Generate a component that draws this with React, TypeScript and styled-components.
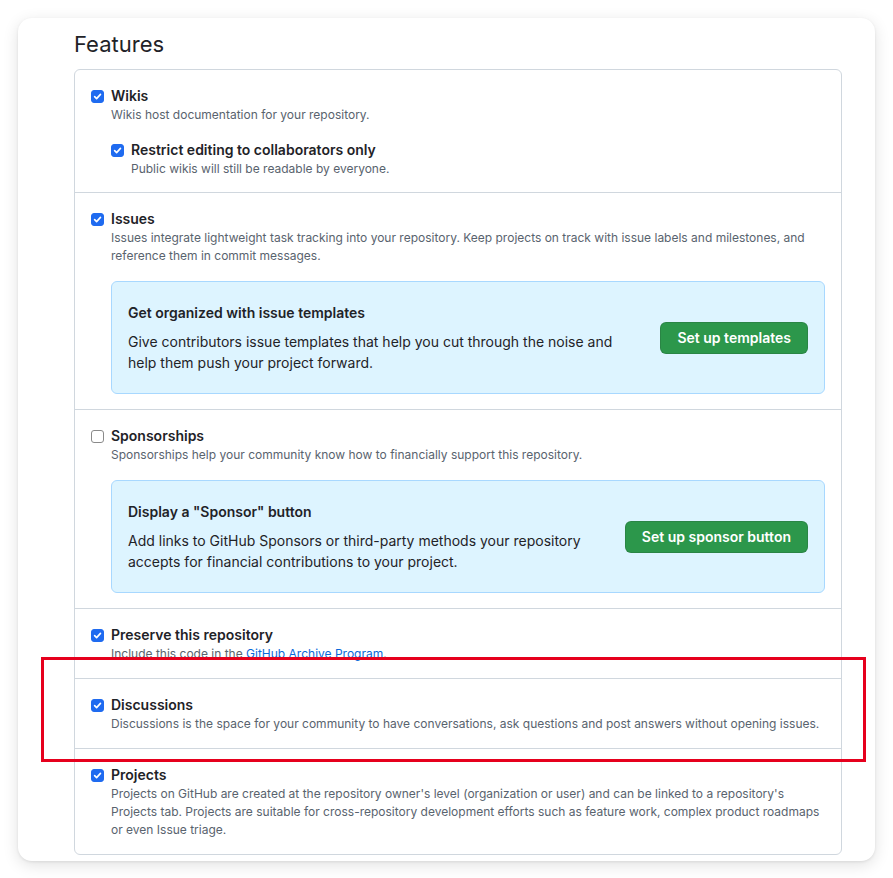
import React from "react";
import styled, { createGlobalStyle } from "styled-components";

const GlobalStyle = createGlobalStyle`
  html, body { margin: 0; padding: 0; background: #ffffff; }
  body {
    font-family: Inter, "Noto Sans", "Liberation Sans", sans-serif;
    color: #1f2328;
    -webkit-font-smoothing: antialiased;
  }
  * { box-sizing: border-box; }
`;

const Page = styled.div`
  padding: 18px;
`;

const Card = styled.div`
  position: relative;
  background: #ffffff;
  border-radius: 14px;
  box-shadow: 0 1px 3px rgba(0, 0, 0, 0.08), 0 4px 16px rgba(0, 0, 0, 0.12);
  padding: 11px 33px 6px 56px;
`;

const Heading = styled.h2`
  margin: 0 0 10px;
  font-size: 22px;
  line-height: 30px;
  font-weight: 400;
  color: #1f2328;
`;

const FeatureBox = styled.div`
  border: 1px solid #d0d7de;
  border-radius: 6px;
`;

const FeatureRow = styled.div<{ $tightBottom?: boolean }>`
  padding: 16px 16px ${(p) => (p.$tightBottom ? "14px" : "15px")};
  & + & {
    border-top: 1px solid #d0d7de;
  }
`;

const CheckLine = styled.div`
  display: flex;
  align-items: center;
  gap: 7px;
`;

const Box = styled.span<{ $checked: boolean }>`
  flex: none;
  width: 13px;
  height: 13px;
  border-radius: 3px;
  display: inline-flex;
  align-items: center;
  justify-content: center;
  background: ${(p) => (p.$checked ? "#1f6bf0" : "#ffffff")};
  border: 1px solid ${(p) => (p.$checked ? "#1f6bf0" : "#8a8a8a")};
`;

const Title = styled.span`
  font-size: 14px;
  line-height: 20px;
  font-weight: 600;
  color: #1f2328;
`;

const Desc = styled.p`
  margin: 0 0 0 20px;
  font-size: 12px;
  line-height: 18px;
  color: #59636e;
`;

const Nested = styled.div`
  margin: 16px 0 0 20px;
`;

const Link = styled.a`
  color: #0969da;
  text-decoration: none;
`;

const Promo = styled.div`
  margin: 16px 0 0 20px;
  display: flex;
  align-items: center;
  gap: 32px;
  padding: 20px 16px;
  background: #ddf4ff;
  border: 1px solid #a8d8ff;
  border-radius: 6px;
`;

const PromoText = styled.div`
  flex: 1;
  min-width: 0;
`;

const PromoTitle = styled.div`
  font-size: 14px;
  line-height: 21px;
  font-weight: 600;
  color: #1f2328;
  margin-bottom: 8px;
`;

const PromoBody = styled.p`
  margin: 0;
  font-size: 14px;
  line-height: 21px;
  color: #1f2328;
`;

const GreenButton = styled.button`
  flex: none;
  height: 32px;
  padding: 0 16px;
  border-radius: 6px;
  border: 1px solid rgba(31, 35, 40, 0.15);
  background: #2c974b;
  color: #ffffff;
  font-family: inherit;
  font-size: 14px;
  font-weight: 600;
  cursor: pointer;
`;

const Highlight = styled.div`
  position: absolute;
  left: 23px;
  top: 639px;
  width: 825px;
  height: 105px;
  border: 3px solid #e6001d;
  pointer-events: none;
`;

function Check({ checked }: { checked: boolean }) {
  return (
    <Box $checked={checked}>
      {checked && (
        <svg width="9" height="9" viewBox="0 0 10 10" aria-hidden>
          <path
            d="M1.8 5.2 L4 7.4 L8.3 2.6"
            fill="none"
            stroke="#fff"
            strokeWidth="1.8"
            strokeLinecap="round"
            strokeLinejoin="round"
          />
        </svg>
      )}
    </Box>
  );
}

function Option({
  checked,
  title,
  children,
}: {
  checked: boolean;
  title: string;
  children?: React.ReactNode;
}) {
  return (
    <>
      <CheckLine>
        <Check checked={checked} />
        <Title>{title}</Title>
      </CheckLine>
      {children && <Desc>{children}</Desc>}
    </>
  );
}

export default function App() {
  return (
    <>
      <GlobalStyle />
      <Page>
        <Card>
          <Heading>Features</Heading>
          <FeatureBox>
            <FeatureRow $tightBottom>
              <Option checked title="Wikis">
                Wikis host documentation for your repository.
              </Option>
              <Nested>
                <Option checked title="Restrict editing to collaborators only">
                  Public wikis will still be readable by everyone.
                </Option>
              </Nested>
            </FeatureRow>
            <FeatureRow>
              <Option checked title="Issues">
                Issues integrate lightweight task tracking into your repository. Keep projects on
                track with issue labels and milestones, and reference them in commit messages.
              </Option>
              <Promo>
                <PromoText>
                  <PromoTitle>Get organized with issue templates</PromoTitle>
                  <PromoBody>
                    Give contributors issue templates that help you cut through the noise and help
                    them push your project forward.
                  </PromoBody>
                </PromoText>
                <GreenButton>Set up templates</GreenButton>
              </Promo>
            </FeatureRow>
            <FeatureRow>
              <Option checked={false} title="Sponsorships">
                Sponsorships help your community know how to financially support this repository.
              </Option>
              <Promo>
                <PromoText>
                  <PromoTitle>Display a "Sponsor" button</PromoTitle>
                  <PromoBody>
                    Add links to GitHub Sponsors or third-party methods your repository accepts for
                    financial contributions to your project.
                  </PromoBody>
                </PromoText>
                <GreenButton>Set up sponsor button</GreenButton>
              </Promo>
            </FeatureRow>
            <FeatureRow>
              <Option checked title="Preserve this repository">
                Include this code in the <Link href="#">GitHub Archive Program</Link>.
              </Option>
            </FeatureRow>
            <FeatureRow>
              <Option checked title="Discussions">
                Discussions is the space for your community to have conversations, ask questions
                and post answers without opening issues.
              </Option>
            </FeatureRow>
            <FeatureRow>
              <Option checked title="Projects">
                Projects on GitHub are created at the repository owner's level (organization or
                user) and can be linked to a repository's Projects tab. Projects are suitable for
                cross-repository development efforts such as feature work, complex product
                roadmaps or even Issue triage.
              </Option>
            </FeatureRow>
          </FeatureBox>
          <Highlight />
        </Card>
      </Page>
    </>
  );
}
